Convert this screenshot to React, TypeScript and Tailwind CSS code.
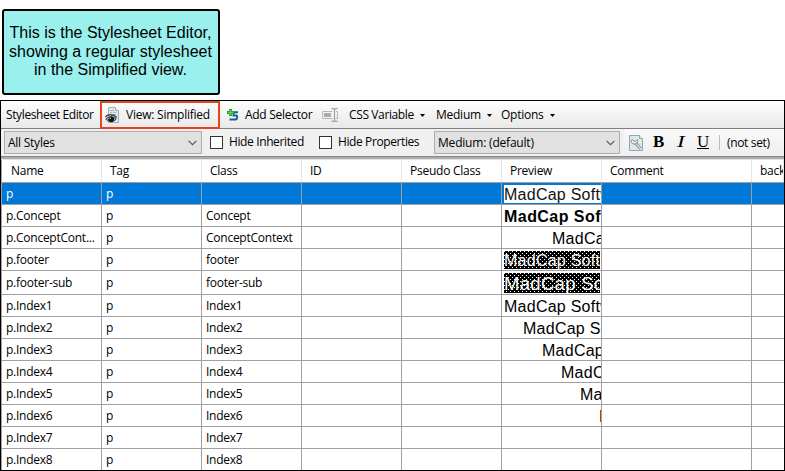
import React from "react";

type Row = { name: string; cls: string; preview?: string; kind?: "selected" | "bold" | "dark" | "darkBig"; tall?: boolean };

const rows: Row[] = [
  { name: "p", cls: "", preview: "pl-[2px]", kind: "selected" },
  { name: "p.Concept", cls: "Concept", preview: "pl-[2px]", kind: "bold" },
  { name: "p.ConceptCont...", cls: "ConceptContext", preview: "pl-[50px]" },
  { name: "p.footer", cls: "footer", preview: "pl-[2px]", kind: "dark" },
  { name: "p.footer-sub", cls: "footer-sub", preview: "pl-[2px]", kind: "darkBig", tall: true },
  { name: "p.Index1", cls: "Index1", preview: "pl-[2px]" },
  { name: "p.Index2", cls: "Index2", preview: "pl-[21px]" },
  { name: "p.Index3", cls: "Index3", preview: "pl-[40px]" },
  { name: "p.Index4", cls: "Index4", preview: "pl-[59px]" },
  { name: "p.Index5", cls: "Index5", preview: "pl-[78px]" },
  { name: "p.Index6", cls: "Index6", preview: "pl-[97px]" },
  { name: "p.Index7", cls: "Index7" },
  { name: "p.Index8", cls: "Index8" },
];

const columns = ["Name", "Tag", "Class", "ID", "Pseudo Class", "Preview", "Comment", "back"];
const grid = "grid grid-cols-[100px_100px_100px_100px_100px_100px_150px_32px]";

function Caret() {
  return (
    <svg className="ml-[6px] mt-px h-[3px] w-[5px] shrink-0" viewBox="0 0 5 3">
      <path d="M0 0h5L2.5 3z" fill="#000" />
    </svg>
  );
}

function Chevron() {
  return (
    <svg className="h-[6px] w-[9px] shrink-0" viewBox="0 0 9 6" fill="none">
      <path d="M.6.8 4.5 4.7 8.4.8" stroke="#555" strokeWidth="1.1" />
    </svg>
  );
}

function ViewIcon() {
  return (
    <svg className="h-4 w-4 shrink-0" viewBox="0 0 16 16" fill="none">
      <path d="M3.5.5h7l3 3v12h-10z" fill="#dfe9ea" stroke="#9fb2b5" />
      <path d="M10.5.5v3h3" fill="#fff" stroke="#9fb2b5" />
      <path d="M5 3.5h4M5 5.500h2M8 5.500h3M5 7.500h6" stroke="#a8babd" />
      <path d="M.3 10C3 6.800 8.500 7 11.800 10.500" stroke="#444" strokeWidth="1.300" />
      <path d="M.8 12C4 9 8 9 11.200 12 8 15.800 3.500 15.600.8 12z" fill="#999" stroke="#444" />
      <circle cx="6.200" cy="12.200" r="2.700" fill="#111" />
      <circle cx="5.200" cy="11.300" r=".7" fill="#fff" />
    </svg>
  );
}

function AddIcon() {
  return (
    <svg className="h-3 w-3 shrink-0" viewBox="0 0 12 12" fill="none">
      <path d="M11 3.200H6.500V6.500H9.200Q10.300 6.500 10.200 8.400T8.500 10.500H2.500" stroke="#126486" strokeWidth="1.900" />
      <path d="M3.500 0v7M0 3.500h7" stroke="#23a03a" strokeWidth="2.800" />
      <path d="M3.500 1v5M1 3.500h5" stroke="#63d25c" />
    </svg>
  );
}

function RenameIcon() {
  return (
    <svg className="h-[14px] w-4 shrink-0" viewBox="0 0 16 14" fill="none">
      <path d="M10.500 3.500H.5v7h10M14 3.500h1.500v7H14" stroke="#b8b8b8" />
      <path d="M2 5h7v4H2z" fill="#aaa" />
      <path d="M9.500.7h2l1 1 1-1h2M12.500 1.500v11M9.500 13.300h2l1-1 1 1h2" stroke="#a0a0a0" strokeWidth="1.200" />
    </svg>
  );
}

function WrenchIcon() {
  return (
    <svg className="h-4 w-[14px] shrink-0" viewBox="0 0 14 16" fill="none">
      <path d="M.5.500h10l3 3v12H.5z" fill="#dce9eb" stroke="#8ca9ad" />
      <path d="M10.500.5v3h3" fill="#f5fafa" stroke="#8ca9ad" />
      <path d="M6.500 8 11.500 13.500" stroke="#858585" strokeWidth="3" />
      <path d="M6.500 8 11.500 13.500" stroke="#ddd" strokeWidth="1.200" />
      <path d="M3.200 4.400C1.500 6 2.500 9 5 9s4.300-2 3.200-4.400L6.300 6.500 4.800 5.900z" fill="#eee" stroke="#858585" />
    </svg>
  );
}

function Preview({ row }: { row: Row }) {
  if (!row.preview) return <div className="border-r border-[#a0a0a0]" />;
  if (row.kind === "dark" || row.kind === "darkBig") {
    return (
      <div className="overflow-hidden border-r border-[#a0a0a0] pb-px pl-[2px] pt-[2px]">
        <div
          className={`h-full w-[96px] whitespace-nowrap bg-black bg-[radial-gradient(circle_at_.5px_.5px,#fff_.6px,transparent_.7px),radial-gradient(circle_at_2.5px_2.5px,#fff_.6px,transparent_.7px)] bg-[length:4px_4px] font-['Liberation_Sans',sans-serif] text-white ${row.kind === "dark" ? "text-[16px] leading-[19px] tracking-[0.25px]" : "text-[18.5px] leading-[22px] tracking-[0.3px]"}`}
        >
          MadCap Software
        </div>
      </div>
    );
  }
  if (row.kind === "selected") {
    return (
      <div className="overflow-hidden border-r border-[#a0a0a0] py-[2px] pl-[2px]">
        <div className="h-[18px] w-[97px] whitespace-nowrap bg-white font-['Liberation_Sans',sans-serif] text-[16px] leading-[20px] tracking-[0.25px] text-[#111]">
          MadCap Software
        </div>
      </div>
    );
  }
  return (
    <div className={`overflow-hidden whitespace-nowrap border-r border-[#a0a0a0] font-['Liberation_Sans',sans-serif] text-[16px] leading-[24px] text-black ${row.preview} ${row.kind === "bold" ? "font-bold tracking-[0.45px]" : "tracking-[0.25px]"}`}>
      MadCap Software
    </div>
  );
}

function Cell({ children }: { children?: React.ReactNode }) {
  return <div className="flex items-center overflow-hidden whitespace-nowrap border-r border-[#a0a0a0] pl-1">{children}</div>;
}

export default function App() {
  return (
    <div className="flex h-[471px] w-[785px] flex-col overflow-hidden bg-white font-['Open_Sans','Noto_Sans',sans-serif] text-[12px] tracking-[-0.25px] text-black">
      <div className="h-[100px] shrink-0 pl-[2px] pt-[9px]">
        <div className="h-[86px] w-[218px] rounded-[3px] border-2 border-black bg-[#99f0ed] pr-px pt-[13px] text-center font-['Liberation_Sans',sans-serif] text-[16px] leading-[18.500px] tracking-normal text-black">
          <div className="whitespace-nowrap">This is the Stylesheet Editor,</div>
          <div className="whitespace-nowrap">showing a regular stylesheet</div>
          <div className="whitespace-nowrap">in the Simplified view.</div>
        </div>
      </div>

      <div className="flex h-[371px] flex-col overflow-hidden border border-black">
        <div className="flex h-[28px] shrink-0 items-center whitespace-nowrap border-b border-[#808080] bg-linear-to-b from-[#fdfdfd] to-[#e9e9e9] pl-[5px]">
          <div className="w-[94px] tracking-[-0.38px]">Stylesheet Editor</div>
          <div className="flex h-[28px] w-[120px] items-center border-2 border-[#e8431f] pl-[3px]">
            <ViewIcon />
            <span className="ml-[5px] tracking-[-0.24px]">View: Simplified</span>
          </div>
          <div className="ml-[7px] flex w-[95px] items-center">
            <AddIcon />
            <span className="ml-[6px] tracking-[-0.28px]">Add Selector</span>
          </div>
          <RenameIcon />
          <div className="ml-[11px] flex w-[87px] items-center tracking-[-0.38px]">CSS Variable<Caret /></div>
          <div className="flex w-[65px] items-center">Medium<Caret /></div>
          <div className="flex items-center">Options<Caret /></div>
        </div>

        <div className="flex h-[27px] shrink-0 items-center whitespace-nowrap bg-[#f0f0f0]">
          <div className="ml-[3px] flex h-[23px] w-[198px] items-center justify-between border border-[#adadad] bg-[#e1e1e1] pl-[3px] pr-1">
            All Styles
            <Chevron />
          </div>
          <div className="ml-2 h-[13px] w-[13px] border border-[#333] bg-white" />
          <div className="-mt-px ml-[6px] w-[90px] tracking-[-0.38px]">Hide Inherited</div>
          <div className="h-[13px] w-[13px] border border-[#333] bg-white" />
          <div className="-mt-px ml-[6px] w-[96px] tracking-[-0.4px]">Hide Properties</div>
          <div className="flex h-[23px] w-[186px] items-center justify-between border border-[#adadad] bg-[#e1e1e1] pl-[3px] pr-1">
            <span className="tracking-[-0.2px]">Medium: (default)</span>
            <Chevron />
          </div>
          <div className="ml-1 flex h-full flex-1 items-center bg-linear-to-b from-[#fafafa] to-[#eeeeee] pl-[5px]">
            <WrenchIcon />
            <div className="-mt-px ml-[10px] w-[24px] font-['Liberation_Serif',serif] text-[17px] font-bold leading-5 text-black">B</div>
            <div className="-mt-px w-[20px] font-['Liberation_Serif',serif] text-[17px] italic leading-5 text-black"><span className="inline-block origin-left scale-x-[1.35]">I</span></div>
            <div className="-mt-px w-[22px] font-['Liberation_Serif',serif] text-[17px] leading-5 text-black underline">U</div>
            <div className="h-[15px] w-px bg-[#bbb]" />
            <div className="ml-[7px] tracking-[-0.35px]">(not set)</div>
          </div>
        </div>

        <div className="h-[3px] shrink-0 border-t border-[#888] bg-[#adadad]" />
        <div className="h-px shrink-0 bg-[#e5e5e5]" />

        <div className="flex-1 overflow-hidden border-l border-[#a0a0a0]">
          <div className={`${grid} h-[23px] border-b border-[#a0a0a0]`}>
            {columns.map((c, i) => (
              <div key={c} className={`flex items-center overflow-hidden whitespace-nowrap border-r border-[#e5e5e5] ${i === 0 ? "pl-[9px]" : "pl-2"}`}>{c}</div>
            ))}
          </div>
          {rows.map((r) => (
            <div
              key={r.name}
              className={`${grid} border-b border-[#a0a0a0] ${r.tall ? "h-[24px]" : "h-[22px]"} ${r.kind === "selected" ? "bg-[#0078d7] text-white" : ""}`}
            >
              <Cell>{r.name}</Cell>
              <Cell>p</Cell>
              <Cell>{r.cls}</Cell>
              <Cell />
              <Cell />
              <Preview row={r} />
              <Cell />
              <div />
            </div>
          ))}
        </div>
      </div>
    </div>
  );
}
